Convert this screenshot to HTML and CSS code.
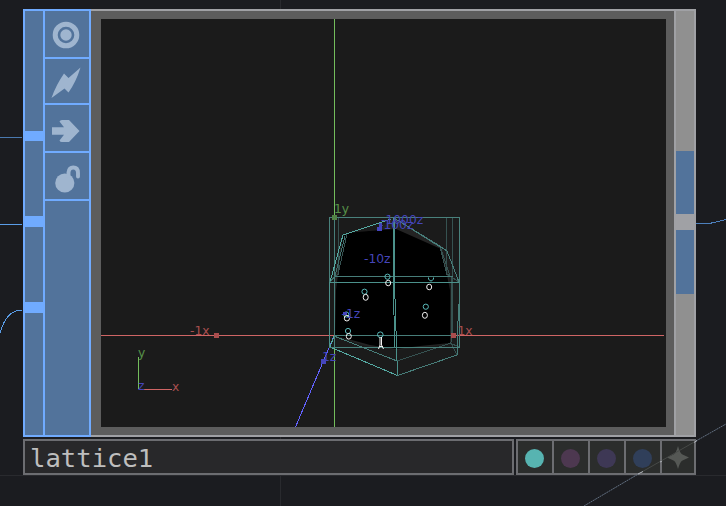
FILE: index.html
```html
<!DOCTYPE html>
<html lang="en">
<head>
<meta charset="utf-8">
<title>lattice1</title>
<link rel="stylesheet" href="styles.css">
</head>
<body>
<svg class="grid" viewBox="0 0 726 506"><path d="M280.5 0V506M0 475.5H726"/></svg>
<main class="node">
  <section class="body">
    <div class="inputs"><i></i><i></i><i></i></div>
    <div class="tools">
      <div class="tool"><svg viewBox="45 11 44 46"><circle cx="66" cy="35" r="10.8" fill="none" stroke="#9fb5cf" stroke-width="5"/><circle cx="66" cy="35" r="5.7"/></svg></div>
      <div class="tool"><svg viewBox="45 59 44 44"><path d="M80.5 67.5Q76 82 68.5 92.5L64.5 88.5L51.5 98Q56 85 64 73.5L68.5 78Z"/></svg></div>
      <div class="tool"><svg viewBox="45 105 44 46"><path d="M52 127.3H64L59.5 121.5Q60 120 62 120H69L79.5 131L69 142H62Q60 142 59.5 140.5L64 134.7H52Z"/></svg></div>
      <div class="tool"><svg viewBox="45 153 44 46"><circle cx="64.8" cy="183" r="9.6"/><path d="M68.5 176V172.5Q69 167.5 73.2 167.5Q78 167.5 78 173V176.5" fill="none" stroke="#9fb5cf" stroke-width="3.9" stroke-linecap="round"/></svg></div>
    </div>
    <div class="frame">
      <svg class="view" viewBox="101 19 565 408">
        <path d="M343 235L380 229L394 218L442 246L449 276L452 344L425 347L398 350L370 347L334 336V282Z" fill="#232323"/>
        <path d="M343 236L347 233L380 230L396 229L441 249L447 275L450 290V343L420 346L396 349L370 345L348 339L335 336L336 290Z" fill="#000"/>
        <g fill="none" shape-rendering="crispEdges">
          <path d="M101 335.5H664" stroke="#cf6565"/>
          <path d="M334.5 19V427" stroke="#73bd5c"/>
          <path d="M334 336L295.5 427" stroke="#6262ff"/>
          <path d="M338.5 218V275M446.5 218V275M452.5 218V335M394 218L440 247L447 275M441 249L450 276M347 234L338 274M330 282L338 274M459 282L447 274M452 276L451 343L397 361M450 343L459 347M451 343L457 355" stroke="#365251"/>
          <path d="M334.5 218V347M334 276.5H453M334 335.5H453M334 336L397 361M394 218L447 251L459 282M458.5 304L457 355L397.5 375.5M394 218L443 248" stroke="#477d79"/>
          <path d="M330 347L397.5 375.5M330 282L343 235L391 219M334 336L330 347" stroke="#55aaa3"/>
          <path d="M345 236L335 276L330 282" stroke="#42706c"/>
          <path d="M329.5 217.5H459.5V347.5H329.5ZM330 282.5H459" stroke="#49817c"/>
          <path d="M329.5 282V347M330 282.5H459M394.5 218V282L396.5 347L397.5 375M393.5 218V282L394.5 347" stroke="#4b918b"/>
        </g>
        <g fill="none" stroke="#5ababa">
          <circle cx="387.5" cy="276.7" r="2.6"/><path d="M428.5 277.5V279Q431 283 433.5 279V277.5"/><circle cx="364.5" cy="291.7" r="2.6"/><circle cx="425.8" cy="306.7" r="2.6"/><circle cx="346.2" cy="314.5" r="2.6"/><circle cx="348" cy="331" r="2.6"/><circle cx="380.3" cy="334.7" r="2.8"/>
        </g>
        <g fill="none" stroke="#f0f0f0">
          <ellipse cx="388.2" cy="283" rx="2.5" ry="2.8"/><ellipse cx="429.2" cy="287" rx="2.5" ry="2.8"/><ellipse cx="365.7" cy="297.3" rx="2.5" ry="3"/><ellipse cx="424.9" cy="315.3" rx="2.5" ry="3"/><ellipse cx="346.9" cy="318.2" rx="2.6" ry="2.8"/><ellipse cx="348.8" cy="336.3" rx="2.5" ry="2.8"/><path d="M380 337V345L378.5 349M381.5 337V345L383.5 349M379 346.5H383"/>
        </g>
        <g shape-rendering="crispEdges">
          <path d="M332 215h5v5h-5z" fill="#528247"/><path d="M214 333h5v5h-5zM451 333h5v5h-5z" fill="#a94d4d"/><path d="M321 359h5v5h-5zM377 227h5v4h-5zM379 223h3v5h-3zM343 312h4v3h-4z" fill="#4545be"/>
          <path d="M138.5 357V389" stroke="#73bd5c"/><path d="M139 389.5H172" stroke="#cf6565"/>
        </g>
        <g class="labels">
          <text x="334" y="213" class="y">1y</text><text x="190" y="335" class="x">-1x</text><text x="457.5" y="335" class="x">1x</text>
          <text x="381" y="224" class="z">-1000z</text><text x="379" y="229" class="z">-100z</text><text x="364" y="263" class="z">-10z</text><text x="341.5" y="318" class="z">-1z</text><text x="322" y="361" class="z">1z</text>
          <text x="138" y="357" class="y">y</text><text x="172" y="391" class="x">x</text><text x="138" y="390" class="z">z</text>
        </g>
      </svg>
    </div>
    <div class="outputs"><i></i><b></b><i></i></div>
  </section>
  <footer class="footer">
    <div class="name">lattice1</div>
    <div class="flags">
      <span><i class="dot teal"></i></span><span><i class="dot plum"></i></span><span><i class="dot violet"></i></span><span><i class="dot blue"></i></span>
      <span><svg viewBox="662 441 32 32"><path d="M678 446Q680 453 682 454.3L689 457.5L682 460.7Q680 462 678 469Q676 462 674 460.7L667 457.5L674 454.3Q676 453 678 446Z" fill="#555855"/></svg></span>
    </div>
  </footer>
</main>
<svg class="wires" viewBox="0 0 726 506">
  <g fill="none" stroke="#5a9de8" shape-rendering="crispEdges"><path d="M0 137.5H22" stroke="#4a79af"/><path d="M0 224.5H22M22 310.5H18C10 312 4 319 0 333"/><path d="M696 223.5H709C716 222.5 720 220.5 726 219.5" stroke="#4d80bd"/></g>
  <path d="M584 506L640 473M696 441L726 424" stroke="#687689" stroke-width=".9" stroke-dasharray="2 .6"/>
  <path d="M640 473L696 441" stroke="#464947"/><path d="M638 474L643 471.5M660 462L662 461M694 442.5L697 440.5" stroke="#b5b8bf"/>
</svg>
</body>
</html>
```
FILE: styles.css
```css
* { box-sizing: border-box; }
body {
  margin: 0;
  width: 726px;
  height: 506px;
  overflow: hidden;
  background: #1b1c20;
  padding: 9px 30px 0 23px;
}
svg { display: block; }
.grid, .wires { position: absolute; left: 0; top: 0; width: 726px; height: 506px; pointer-events: none; }
.grid path { stroke: #292a2e; fill: none; }
.node { position: relative; width: 673px; }
.body { display: flex; height: 428px; background: #5d5d5d; }
.inputs {
  display: flex;
  flex-direction: column;
  width: 20px;
  padding-top: 120px;
  gap: 75px;
  background: #52739b;
  border: 2px solid #70abff;
  border-right: 0;
}
.inputs i { height: 11px; background: #70abff; }
.inputs i:first-child { height: 10px; }
.tools {
  display: grid;
  grid-template-rows: 48px 46px 48px 48px 1fr;
  width: 48px;
  background: #52739b;
  border: 2px solid #70abff;
}
.tool { border-bottom: 2px solid #70abff; }
.tool svg { width: 44px; height: 100%; fill: #9fb5cf; }
.frame {
  flex: 1;
  padding: 8px 8px 8px 10px;
  border: solid #a0a1a5;
  border-width: 2px 0;
}
.view { width: 565px; height: 408px; background: #1b1b1b; }
.outputs {
  display: flex;
  flex-direction: column;
  width: 22px;
  padding-top: 140px;
  background: #909090;
  border: 2px solid #a0a1a5;
}
.outputs i { height: 63px; background: #52739b; }
.outputs b { height: 16px; background: #a0a1a5; }
.outputs i:last-child { height: 64px; }
.labels { font: 12.3px "DejaVu Sans", sans-serif; }
.x { fill: #a94f4f; }
.y { fill: #579149; }
.z { fill: #4545bb; }
.footer { display: flex; gap: 2px; margin-top: 2px; height: 36px; }
.name {
  width: 491px;
  padding-left: 5px;
  border: 2px solid #6c6d71;
  background: #28282a;
  color: #bebebe;
  font: 25.6px/34px "DejaVu Sans Mono", monospace;
}
.flags {
  display: grid;
  grid-template-columns: 34px 34px 34px 34px 32px;
  gap: 2px;
  width: 180px;
  padding: 2px;
  background: #6c6d71;
}
.flags span { display: grid; place-items: center; background: #2b2d2c; }
.flags svg { width: 32px; height: 32px; }
.dot { width: 19px; height: 19px; margin: 3px 2px 0 0; border-radius: 50%; }
.teal { background: #57b4b1; }
.plum { background: #4d3850; }
.violet { background: #3e3855; }
.blue { background: #303f5a; }
```
